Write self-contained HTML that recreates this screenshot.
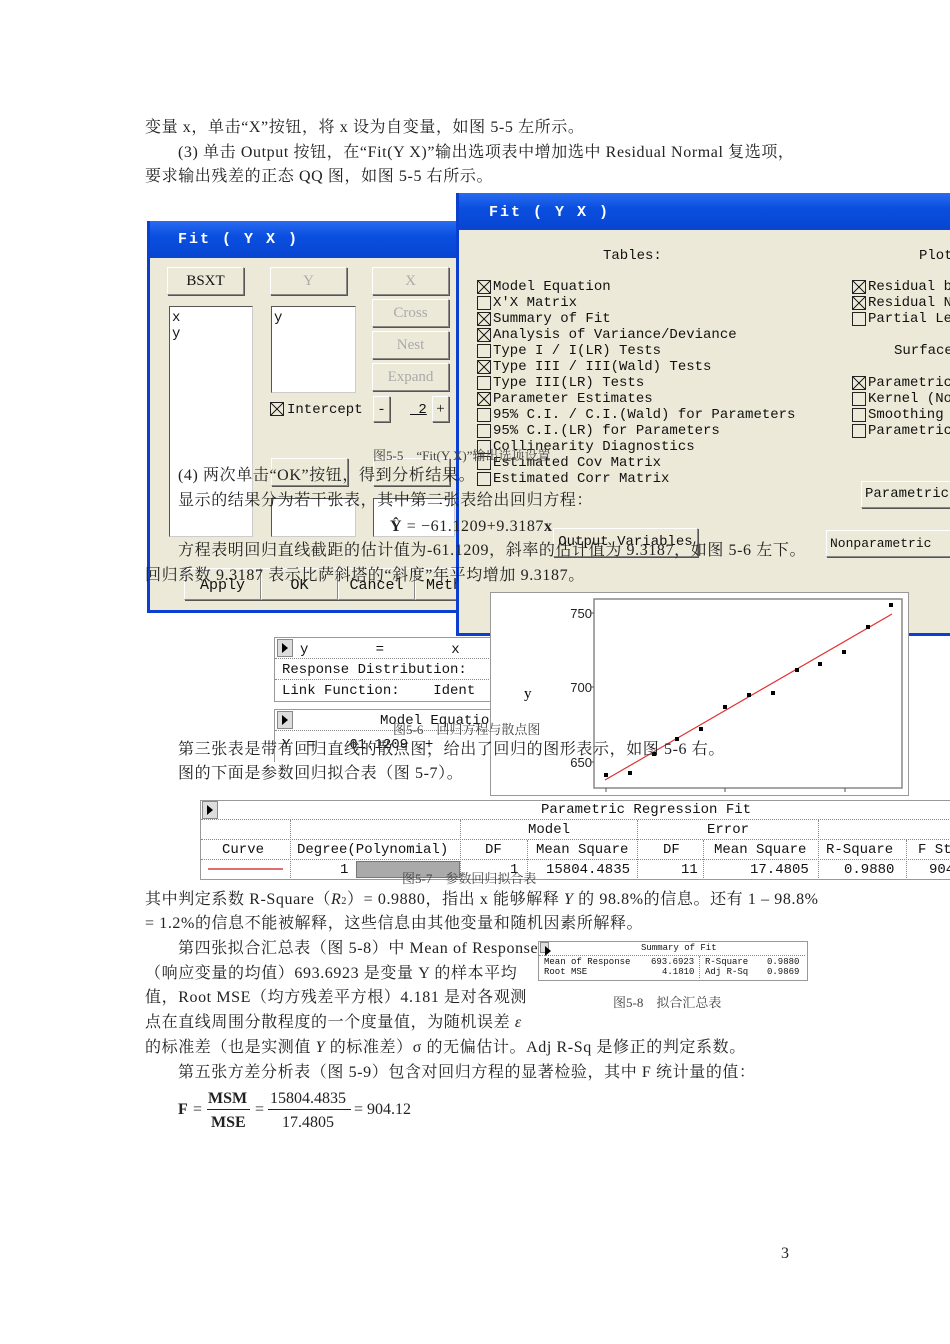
<!DOCTYPE html>
<html><head><meta charset="utf-8">
<style>
body{margin:0;background:#fff;}
#pg{position:relative;width:950px;height:1344px;overflow:hidden;background:#fff;}
.a{position:absolute;}
.t{position:absolute;font-family:"Liberation Serif","Noto Serif CJK SC",serif;font-size:16px;letter-spacing:0.6px;color:#222;white-space:nowrap;z-index:10;line-height:18px;}
.cap{position:absolute;font-family:"Liberation Serif","Noto Serif CJK SC",serif;font-size:13px;color:#444;white-space:nowrap;z-index:10;}
.m{position:absolute;font-family:"Liberation Mono","DejaVu Sans Mono",monospace;font-size:14px;color:#111;white-space:nowrap;line-height:16px;}
.dlg{position:absolute;background:#ece9d8;border:3px solid #0a3fd0;border-top:none;}
.tb{position:absolute;left:0;right:0;top:0;height:37px;background:linear-gradient(#2a6cf0,#0a4fe0 40%,#0845d0);}
.tt{position:absolute;font-family:"Liberation Mono",monospace;font-weight:bold;color:#fff;font-size:15px;letter-spacing:2px;}
.btn{position:absolute;background:#ece9d8;border:1px solid;border-color:#fff #888 #888 #fff;box-shadow:1px 1px 0 #555;font-family:"Liberation Serif",serif;font-size:15px;text-align:center;color:#111;}
.dis{color:#aaa;}
.box{position:absolute;background:#fff;border:1px solid #333;border-color:#555 #ccc #ccc #555;}
.cb{position:absolute;width:12px;height:12px;border:1px solid #222;background:transparent;}
.cb.x{background:linear-gradient(45deg,transparent 46%,#222 46%,#222 54%,transparent 54%),linear-gradient(-45deg,transparent 46%,#222 46%,#222 54%,transparent 54%);}
.gt{position:absolute;border:1px solid #999;background:#fff;}
.arr{position:absolute;width:14px;height:16px;background:#ddd;border:1px solid #888;}
.arr:after{content:"";position:absolute;left:4px;top:3px;border-left:6px solid #000;border-top:5px solid transparent;border-bottom:5px solid transparent;}
.dl{position:absolute;border-top:1px dotted #888;}
.dv{position:absolute;border-left:1px dotted #888;}
</style></head><body><div id="pg">

<!-- LEFT DIALOG -->
<div class="dlg" style="left:147px;top:221px;width:310px;height:389px;">
 <div class="tb"></div>
 <div class="tt" style="left:28px;top:10px;">Fit ( Y X )</div>
</div>
<div class="btn" style="left:167px;top:267px;width:75px;height:26px;line-height:26px;">BSXT</div>
<div class="btn dis" style="left:270px;top:267px;width:75px;height:26px;line-height:26px;">Y</div>
<div class="btn dis" style="left:372px;top:267px;width:75px;height:26px;line-height:26px;">X</div>
<div class="btn dis" style="left:372px;top:299px;width:75px;height:26px;line-height:26px;">Cross</div>
<div class="btn dis" style="left:372px;top:331px;width:75px;height:26px;line-height:26px;">Nest</div>
<div class="btn dis" style="left:372px;top:363px;width:75px;height:26px;line-height:26px;">Expand</div>
<div class="box" style="left:169px;top:306px;width:82px;height:229px;"></div>
<div class="m" style="left:172px;top:310px;">x<br>y</div>
<div class="box" style="left:271px;top:306px;width:83px;height:85px;"></div>
<div class="m" style="left:274px;top:310px;">y</div>
<div class="cb x" style="left:270px;top:402px;"></div>
<div class="m" style="left:287px;top:402px;">Intercept</div>
<div class="btn" style="left:373px;top:396px;width:15px;height:24px;line-height:24px;">-</div>
<div class="m" style="left:410px;top:402px;text-decoration:underline;">&nbsp;2</div>
<div class="btn" style="left:432px;top:396px;width:15px;height:24px;line-height:24px;">+</div>
<div class="btn" style="left:271px;top:458px;width:75px;height:26px;"></div>
<div class="btn" style="left:373px;top:458px;width:75px;height:26px;"></div>
<div class="box" style="left:271px;top:498px;width:83px;height:37px;"></div>
<div class="box" style="left:373px;top:498px;width:80px;height:37px;"></div>
<div class="btn" style="left:184px;top:568px;width:75px;height:30px;line-height:34px;font-family:'Liberation Mono',monospace;">Apply</div>
<div class="btn" style="left:261px;top:568px;width:75px;height:30px;line-height:34px;font-family:'Liberation Mono',monospace;">OK</div>
<div class="btn" style="left:338px;top:568px;width:75px;height:30px;line-height:34px;font-family:'Liberation Mono',monospace;">Cancel</div>
<div class="btn" style="left:415px;top:568px;width:60px;height:30px;line-height:34px;font-family:'Liberation Mono',monospace;text-align:left;padding-left:10px;">Meth</div>

<!-- RIGHT DIALOG -->
<div class="dlg" style="left:456px;top:193px;width:500px;height:440px;border-right:none;">
 <div class="tb"></div>
 <div class="tt" style="left:30px;top:11px;">Fit ( Y X )</div>
</div>
<div class="m" style="left:603px;top:248px;">Tables:</div>
<div class="m" style="left:919px;top:248px;">Plot</div>
<div class="cb x" style="left:477px;top:280px;"></div><div class="m" style="left:493px;top:279px;">Model Equation</div>
<div class="cb" style="left:477px;top:296px;"></div><div class="m" style="left:493px;top:295px;">X'X Matrix</div>
<div class="cb x" style="left:477px;top:312px;"></div><div class="m" style="left:493px;top:311px;">Summary of Fit</div>
<div class="cb x" style="left:477px;top:328px;"></div><div class="m" style="left:493px;top:327px;">Analysis of Variance/Deviance</div>
<div class="cb" style="left:477px;top:344px;"></div><div class="m" style="left:493px;top:343px;">Type I / I(LR) Tests</div>
<div class="cb x" style="left:477px;top:360px;"></div><div class="m" style="left:493px;top:359px;">Type III / III(Wald) Tests</div>
<div class="cb" style="left:477px;top:376px;"></div><div class="m" style="left:493px;top:375px;">Type III(LR) Tests</div>
<div class="cb x" style="left:477px;top:392px;"></div><div class="m" style="left:493px;top:391px;">Parameter Estimates</div>
<div class="cb" style="left:477px;top:408px;"></div><div class="m" style="left:493px;top:407px;">95% C.I. / C.I.(Wald) for Parameters</div>
<div class="cb" style="left:477px;top:424px;"></div><div class="m" style="left:493px;top:423px;">95% C.I.(LR) for Parameters</div>
<div class="cb" style="left:477px;top:440px;"></div><div class="m" style="left:493px;top:439px;">Collinearity Diagnostics</div>
<div class="cb" style="left:477px;top:456px;"></div><div class="m" style="left:493px;top:455px;">Estimated Cov Matrix</div>
<div class="cb" style="left:477px;top:472px;"></div><div class="m" style="left:493px;top:471px;">Estimated Corr Matrix</div>
<div class="cb x" style="left:852px;top:280px;"></div><div class="m" style="left:868px;top:279px;">Residual b</div>
<div class="cb x" style="left:852px;top:296px;"></div><div class="m" style="left:868px;top:295px;">Residual N</div>
<div class="cb" style="left:852px;top:312px;"></div><div class="m" style="left:868px;top:311px;">Partial Le</div>
<div class="m" style="left:894px;top:343px;">Surface</div>
<div class="cb x" style="left:852px;top:376px;"></div><div class="m" style="left:868px;top:375px;">Parametric</div>
<div class="cb" style="left:852px;top:392px;"></div><div class="m" style="left:868px;top:391px;">Kernel (No</div>
<div class="cb" style="left:852px;top:408px;"></div><div class="m" style="left:868px;top:407px;">Smoothing</div>
<div class="cb" style="left:852px;top:424px;"></div><div class="m" style="left:868px;top:423px;">Parametric</div>
<div class="btn" style="left:861px;top:481px;width:95px;height:25px;line-height:25px;font-family:'Liberation Mono',monospace;font-size:14px;text-align:left;padding-left:3px;">Parametric</div>
<div class="btn" style="left:826px;top:530px;width:130px;height:25px;line-height:25px;font-family:'Liberation Mono',monospace;font-size:13px;text-align:left;padding-left:3px;">Nonparametric</div>
<div class="btn" style="left:553px;top:528px;width:143px;height:27px;line-height:27px;font-family:'Liberation Mono',monospace;font-size:14px;">Output Variables</div>

<!-- PLOT -->
<div class="a" style="left:490px;top:592px;width:417px;height:202px;background:#fff;border:1px solid #999;"></div>
<svg class="a" style="left:490px;top:592px;" width="420" height="204">
 <rect x="104" y="7" width="308" height="189" fill="none" stroke="#888" stroke-width="1.5"/>
 <g font-family="Liberation Sans,sans-serif" font-size="13" fill="#222" text-anchor="end">
  <text x="102" y="26">750</text><text x="102" y="100">700</text><text x="102" y="175">650</text>
 </g>
 <g stroke="#555"><line x1="101" y1="21" x2="104" y2="21"/><line x1="101" y1="95" x2="104" y2="95"/><line x1="101" y1="170" x2="104" y2="170"/>
 <line x1="116" y1="196" x2="116" y2="200"/><line x1="235" y1="196" x2="235" y2="200"/><line x1="355" y1="196" x2="355" y2="200"/></g>
 <text x="34" y="106" font-family="Liberation Serif,serif" font-size="15">y</text>
 <line x1="115" y1="188" x2="402" y2="22" stroke="#e03030" stroke-width="1.2"/>
 <g fill="#000">
  <rect x="114" y="181" width="4" height="4"/><rect x="138" y="179" width="4" height="4"/><rect x="162" y="160" width="4" height="4"/>
  <rect x="185" y="145" width="4" height="4"/><rect x="209" y="135" width="4" height="4"/><rect x="233" y="113" width="4" height="4"/>
  <rect x="257" y="101" width="4" height="4"/><rect x="281" y="99" width="4" height="4"/><rect x="305" y="76" width="4" height="4"/>
  <rect x="328" y="70" width="4" height="4"/><rect x="352" y="58" width="4" height="4"/><rect x="376" y="33" width="4" height="4"/><rect x="399" y="11" width="4" height="4"/>
 </g>
</svg>

<!-- small tables -->
<div class="gt" style="left:274px;top:637px;width:215px;height:63px;"></div>
<div class="arr" style="left:277px;top:639px;"></div>
<div class="m" style="left:300px;top:642px;">y&nbsp;&nbsp;&nbsp;&nbsp;&nbsp;&nbsp;&nbsp;&nbsp;=&nbsp;&nbsp;&nbsp;&nbsp;&nbsp;&nbsp;&nbsp;&nbsp;x</div>
<div class="dl" style="left:275px;top:658px;width:214px;"></div>
<div class="m" style="left:282px;top:662px;">Response Distribution:</div>
<div class="dl" style="left:275px;top:679px;width:214px;"></div>
<div class="m" style="left:282px;top:683px;">Link Function:&nbsp;&nbsp;&nbsp;&nbsp;Ident</div>
<div class="gt" style="left:274px;top:709px;width:215px;height:52px;border-bottom:none;"></div>
<div class="arr" style="left:277px;top:711px;"></div>
<div class="m" style="left:380px;top:713px;">Model Equatio</div>
<div class="dl" style="left:275px;top:730px;width:214px;"></div>
<div class="m" style="left:282px;top:737px;">Y&nbsp;&nbsp;=&nbsp;&nbsp;&nbsp;&nbsp;61.1209&nbsp;&nbsp;+</div>

<!-- big table -->
<div class="gt" style="left:200px;top:800px;width:760px;height:78px;"></div>
<div class="arr" style="left:202px;top:801px;"></div>
<div class="m" style="left:541px;top:802px;">Parametric Regression Fit</div>
<div class="dl" style="left:201px;top:819px;width:750px;"></div>
<div class="dl" style="left:201px;top:839px;width:750px;"></div>
<div class="dl" style="left:201px;top:859px;width:750px;"></div>
<div class="dv" style="left:290px;top:820px;height:58px;"></div>
<div class="dv" style="left:460px;top:820px;height:58px;"></div>
<div class="dv" style="left:527px;top:840px;height:38px;"></div>
<div class="dv" style="left:637px;top:820px;height:58px;"></div>
<div class="dv" style="left:703px;top:840px;height:38px;"></div>
<div class="dv" style="left:818px;top:820px;height:58px;"></div>
<div class="dv" style="left:906px;top:840px;height:38px;"></div>
<div class="m" style="left:528px;top:822px;">Model</div>
<div class="m" style="left:707px;top:822px;">Error</div>
<div class="m" style="left:222px;top:842px;">Curve</div>
<div class="m" style="left:297px;top:842px;">Degree(Polynomial)</div>
<div class="m" style="left:485px;top:842px;">DF</div>
<div class="m" style="left:536px;top:842px;">Mean Square</div>
<div class="m" style="left:663px;top:842px;">DF</div>
<div class="m" style="left:714px;top:842px;">Mean Square</div>
<div class="m" style="left:826px;top:842px;">R-Square</div>
<div class="m" style="left:918px;top:842px;">F St</div>
<div class="a" style="left:208px;top:868px;width:75px;height:2px;background:#e07070;"></div>
<div class="m" style="left:340px;top:862px;">1</div>
<div class="a" style="left:356px;top:861px;width:102px;height:15px;background:#aaa;border:1px solid #777;"></div>
<div class="m" style="left:510px;top:862px;">1</div>
<div class="m" style="left:546px;top:862px;">15804.4835</div>
<div class="m" style="left:681px;top:862px;">11</div>
<div class="m" style="left:750px;top:862px;">17.4805</div>
<div class="m" style="left:844px;top:862px;">0.9880</div>
<div class="m" style="left:929px;top:862px;">904</div>

<!-- summary of fit -->
<div class="gt" style="left:538px;top:941px;width:268px;height:38px;"></div>
<div class="arr" style="left:540px;top:942px;width:7px;height:9px;"></div>
<div class="m" style="left:641px;top:943px;font-size:9px;line-height:10px;">Summary of Fit</div>
<div class="dl" style="left:539px;top:955px;width:266px;"></div>
<div class="m" style="left:544px;top:957px;font-size:9px;line-height:10px;">Mean of Response</div>
<div class="m" style="left:651px;top:957px;font-size:9px;line-height:10px;">693.6923</div>
<div class="m" style="left:705px;top:957px;font-size:9px;line-height:10px;">R-Square</div>
<div class="m" style="left:767px;top:957px;font-size:9px;line-height:10px;">0.9880</div>
<div class="m" style="left:544px;top:967px;font-size:9px;line-height:10px;">Root MSE</div>
<div class="m" style="left:662px;top:967px;font-size:9px;line-height:10px;">4.1810</div>
<div class="m" style="left:705px;top:967px;font-size:9px;line-height:10px;">Adj R-Sq</div>
<div class="m" style="left:767px;top:967px;font-size:9px;line-height:10px;">0.9869</div>
<div class="dv" style="left:699px;top:956px;height:22px;"></div>

<!-- TEXT -->
<div class="t" style="left:145px;top:119px;">变量 x，单击“X”按钮，将 x 设为自变量，如图 5-5 左所示。</div>
<div class="t" style="left:178px;top:144px;">(3) 单击 Output 按钮，在“Fit(Y X)”输出选项表中增加选中 Residual Normal 复选项，</div>
<div class="t" style="left:145px;top:168px;">要求输出残差的正态 QQ 图，如图 5-5 右所示。</div>
<div class="cap" style="left:373px;top:445px;">图5-5　“Fit(Y X)”输出选项设置</div>
<div class="t" style="left:178px;top:467px;">(4) 两次单击“OK”按钮，得到分析结果。</div>
<div class="t" style="left:178px;top:492px;">显示的结果分为若干张表，其中第二张表给出回归方程：</div>
<div class="t" style="left:390px;top:518px;"><b>Ŷ</b> = −61.1209+9.3187<b>x</b></div>
<div class="t" style="left:178px;top:542px;">方程表明回归直线截距的估计值为-61.1209，斜率的估计值为 9.3187，如图 5-6 左下。</div>
<div class="t" style="left:145px;top:567px;">回归系数 9.3187 表示比萨斜塔的“斜度”年平均增加 9.3187。</div>
<div class="cap" style="left:393px;top:719px;">图5-6　回归方程与散点图</div>
<div class="t" style="left:178px;top:741px;">第三张表是带有回归直线的散点图，给出了回归的图形表示，如图 5-6 右。</div>
<div class="t" style="left:178px;top:765px;">图的下面是参数回归拟合表（图 5-7）。</div>
<div class="cap" style="left:402px;top:868px;">图5-7　参数回归拟合表</div>
<div class="t" style="left:145px;top:891px;">其中判定系数 R-Square（<i>R</i><span style="font-size:10px">2</span>）= 0.9880，指出 x 能够解释 <i>Y</i> 的 98.8%的信息。还有 1 – 98.8%</div>
<div class="t" style="left:145px;top:915px;">= 1.2%的信息不能被解释，这些信息由其他变量和随机因素所解释。</div>
<div class="t" style="left:178px;top:940px;">第四张拟合汇总表（图 5-8）中 Mean of Response</div>
<div class="t" style="left:145px;top:965px;">（响应变量的均值）693.6923 是变量 Y 的样本平均</div>
<div class="t" style="left:145px;top:989px;">值，Root MSE（均方残差平方根）4.181 是对各观测</div>
<div class="cap" style="left:613px;top:992px;">图5-8　拟合汇总表</div>
<div class="t" style="left:145px;top:1014px;">点在直线周围分散程度的一个度量值，为随机误差 <i>ε</i></div>
<div class="t" style="left:145px;top:1039px;">的标准差（也是实测值 <i>Y</i> 的标准差）σ 的无偏估计。Adj R-Sq 是修正的判定系数。</div>
<div class="t" style="left:178px;top:1064px;">第五张方差分析表（图 5-9）包含对回归方程的显著检验，其中 F 统计量的值：</div>
<div class="t" style="left:178px;top:1101px;"><b>F</b> =</div>
<div class="t" style="left:208px;top:1090px;font-weight:bold;letter-spacing:0;">MSM</div>
<div class="a" style="left:207px;top:1109px;width:43px;height:1px;background:#222;"></div>
<div class="t" style="left:211px;top:1114px;font-weight:bold;letter-spacing:0;">MSE</div>
<div class="t" style="left:255px;top:1101px;">=</div>
<div class="t" style="left:270px;top:1090px;letter-spacing:0;">15804.4835</div>
<div class="a" style="left:268px;top:1109px;width:83px;height:1px;background:#222;"></div>
<div class="t" style="left:282px;top:1114px;letter-spacing:0;">17.4805</div>
<div class="t" style="left:354px;top:1101px;letter-spacing:0;">= 904.12</div>
<div class="t" style="left:781px;top:1245px;">3</div>

</div></body></html>
